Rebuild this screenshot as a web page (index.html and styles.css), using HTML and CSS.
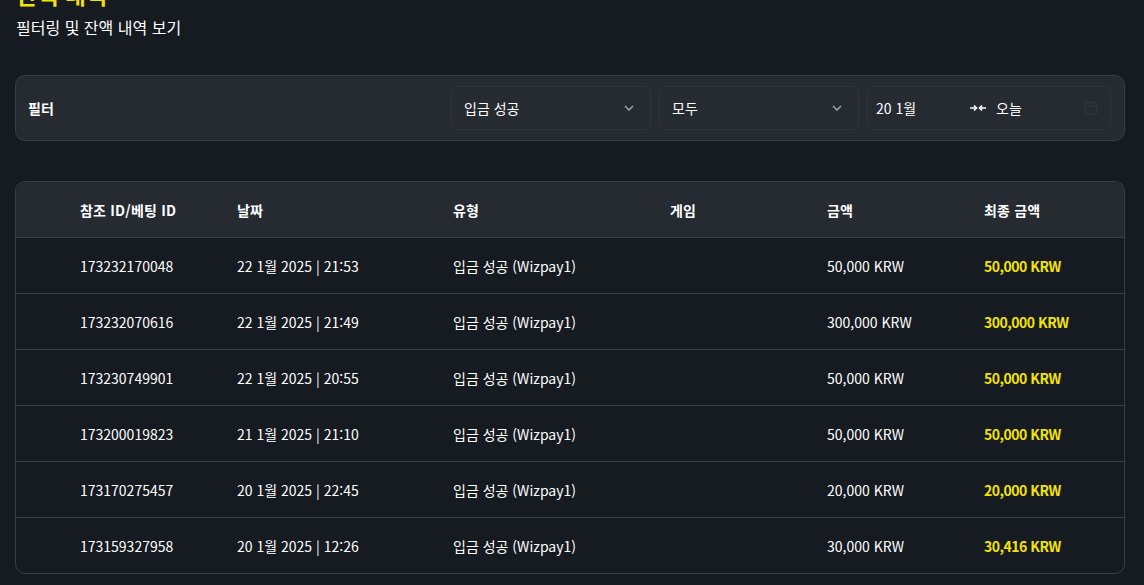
FILE: index.html
```html
<!DOCTYPE html>
<html lang="ko">
<head>
  <meta charset="UTF-8" />
  <meta name="viewport" content="width=device-width, initial-scale=1" />
  <title>잔액 내역</title>
  <link rel="stylesheet" href="styles.css">
</head>
<body>

  <!-- PAGE HEADER -->
  <div class="page-head">
    <h1>잔액 내역</h1>
    <p>필터링 및 잔액 내역 보기</p>
  </div>

  <!-- FILTER -->
  <div class="filter-card">
    <div class="filter-title">필터</div>
    <div class="filter-controls">
      <div class="select">
        <span>입금 성공</span>
        <svg class="chevron" width="10" height="6" viewBox="0 0 10 6"><path d="M1 1l4 4 4-4" fill="none" stroke="#9a9da3" stroke-width="1.6"/></svg>
      </div>
      <div class="select">
        <span>모두</span>
        <svg class="chevron" width="10" height="6" viewBox="0 0 10 6"><path d="M1 1l4 4 4-4" fill="none" stroke="#9a9da3" stroke-width="1.6"/></svg>
      </div>
      <div class="select date-range">
        <span class="date-from">20 1월</span>
        <svg class="range-icon" width="16" height="8" viewBox="0 0 16 8">
          <path d="M0 4h5M4 1.5l2.5 2.5L4 6.5" fill="none" stroke="#fff" stroke-width="1.6"/>
          <path d="M16 4h-5M12 1.5L9.5 4 12 6.5" fill="none" stroke="#fff" stroke-width="1.6"/>
        </svg>
        <span class="date-to">오늘</span>
        <svg class="cal-icon" width="14" height="16" viewBox="0 0 14 16">
          <rect x="1" y="2.5" width="12" height="12" rx="2.5" fill="none" stroke="#30333a" stroke-width="1.4"/>
          <path d="M1 6.5h12M4 1v3M10 1v3" stroke="#30333a" stroke-width="1.4"/>
        </svg>
      </div>
    </div>
  </div>

  <!-- TABLE -->
  <div class="history-table">
    <div class="row head">
      <div>참조 ID/베팅 ID</div>
      <div>날짜</div>
      <div>유형</div>
      <div>게임</div>
      <div>금액</div>
      <div>최종 금액</div>
    </div>
    <div class="row">
      <div>173232170048</div>
      <div>22 1월 2025 | 21:53</div>
      <div>입금 성공 (Wizpay1)</div>
      <div></div>
      <div>50,000 KRW</div>
      <div class="final">50,000 KRW</div>
    </div>
    <div class="row">
      <div>173232070616</div>
      <div>22 1월 2025 | 21:49</div>
      <div>입금 성공 (Wizpay1)</div>
      <div></div>
      <div>300,000 KRW</div>
      <div class="final">300,000 KRW</div>
    </div>
    <div class="row">
      <div>173230749901</div>
      <div>22 1월 2025 | 20:55</div>
      <div>입금 성공 (Wizpay1)</div>
      <div></div>
      <div>50,000 KRW</div>
      <div class="final">50,000 KRW</div>
    </div>
    <div class="row">
      <div>173200019823</div>
      <div>21 1월 2025 | 21:10</div>
      <div>입금 성공 (Wizpay1)</div>
      <div></div>
      <div>50,000 KRW</div>
      <div class="final">50,000 KRW</div>
    </div>
    <div class="row">
      <div>173170275457</div>
      <div>20 1월 2025 | 22:45</div>
      <div>입금 성공 (Wizpay1)</div>
      <div></div>
      <div>20,000 KRW</div>
      <div class="final">20,000 KRW</div>
    </div>
    <div class="row">
      <div>173159327958</div>
      <div>20 1월 2025 | 12:26</div>
      <div>입금 성공 (Wizpay1)</div>
      <div></div>
      <div>30,000 KRW</div>
      <div class="final">30,416 KRW</div>
    </div>
  </div>

</body>
</html>
```

FILE: styles.css
```css
/* RESET */
* {
  margin: 0;
  padding: 0;
  box-sizing: border-box;
}

html, body {
  width: 100%;
  height: 100%;
  overflow: hidden;
}

body {
  background: #161a21;
  color: #fff;
  font-family: 'Noto Sans CJK KR', 'Noto Sans', sans-serif;
  font-size: 14px;
  padding: 0 19px 0 15px;
}

/* PAGE HEADER */
.page-head {
  margin-top: -22px;
  padding-left: 1px;
}

.page-head h1 {
  font-size: 23px;
  line-height: 32px;
  font-weight: 700;
  color: #f2e20a;
}

.page-head p {
  font-size: 16px;
  line-height: 22px;
  margin-top: 6px;
}

/* FILTER */
.filter-card {
  margin-top: 37px;
  display: flex;
  align-items: center;
  justify-content: space-between;
  background: #262a31;
  border: 1px solid #3a3d42;
  border-radius: 10px;
  padding: 10px 13px 10px 12px;
}

.filter-title {
  font-weight: 700;
}

.filter-controls {
  display: flex;
  gap: 8px;
}

.select {
  width: 200px;
  height: 44px;
  display: flex;
  align-items: center;
  justify-content: space-between;
  padding: 0 16px 0 12px;
  border: 1px solid #31343a;
  border-radius: 6px;
  background: #262a31;
}

.select.date-range {
  width: 244px;
  justify-content: flex-start;
  padding: 0 12px 0 8px;
}

.date-from {
  width: 94px;
}

.range-icon {
  margin-right: 10px;
}

.cal-icon {
  margin-left: auto;
}

/* TABLE */
.history-table {
  margin-top: 40px;
  border: 1px solid #3a3d42;
  border-radius: 10px;
  overflow: hidden;
}

.row {
  display: grid;
  grid-template-columns: 157px 216px 217px 157px 157px 1fr;
  align-items: center;
  height: 56px;
  padding-left: 64px;
  border-top: 1px solid #3a3d42;
}

.row.head {
  border-top: none;
  height: 55px;
  background: #262a31;
  font-weight: 700;
  letter-spacing: 0.2px;
}

.row .final {
  color: #f2e20a;
  font-weight: 700;
  letter-spacing: -0.5px;
}
```
